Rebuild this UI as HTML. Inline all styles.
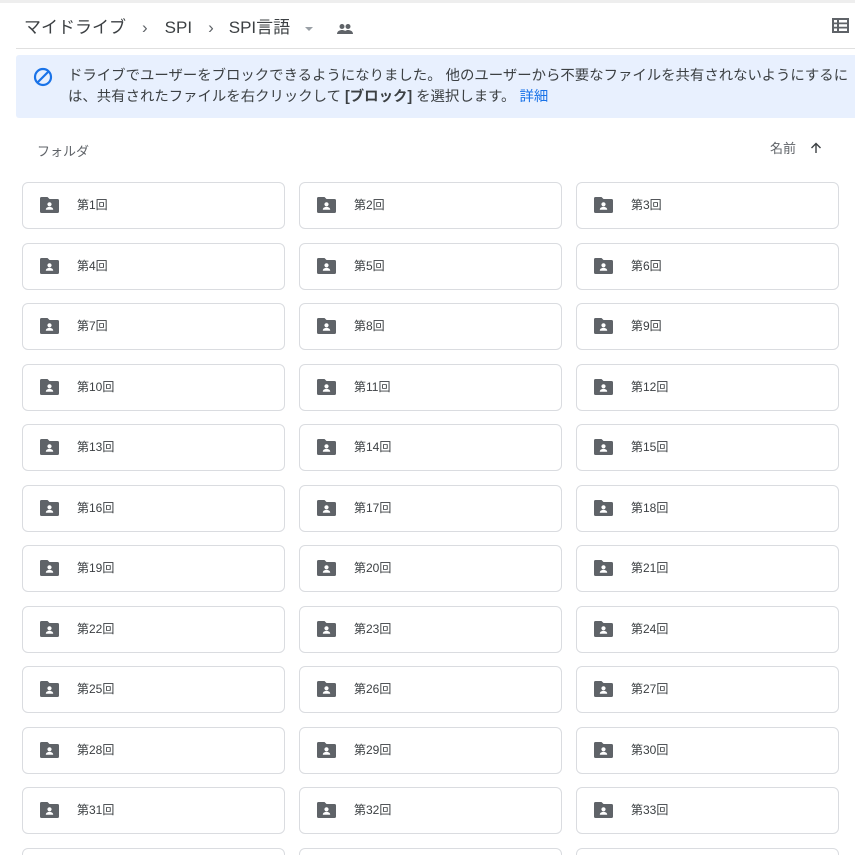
<!DOCTYPE html>
<html style="width:855px;height:855px;overflow:hidden"><head><meta charset="utf-8"><style>
*{margin:0;padding:0;box-sizing:border-box}
body{width:855px;height:855px;overflow:hidden;background:#fff;font-family:"Liberation Sans","Noto Sans CJK JP",sans-serif;position:relative;color:#3c4043}
.top{position:absolute;left:0;top:0;width:855px;height:3px;background:#eeeeee}
.bc{position:absolute;left:24px;top:13px;font-size:17px;color:#3c4043;white-space:nowrap}
.bc span{display:inline-block}
.div{position:absolute;left:16px;top:48px;width:839px;height:1px;background:#e0e0e0}
.banner{position:absolute;left:16px;top:55px;width:850px;height:63px;background:#e8f0fe;border-radius:3px}
.banner .t{position:absolute;left:52px;top:11px;font-size:14.4px;line-height:21px;color:#3c4043;white-space:nowrap}
.banner a{color:#1a73e8;text-decoration:none}
.lbl{position:absolute;left:37px;top:141px;font-size:13px;color:#5f6368}
.nm{position:absolute;left:770px;top:138px;font-size:13px;color:#5f6368}
.card{position:absolute;width:263px;height:47px;border:1px solid #dadce0;border-radius:6px;background:#fff}
.card svg{position:absolute;left:17px;top:14px}
.card .x{position:absolute;left:54px;top:13px;font-size:12px;color:#3c4043}
</style></head><body>
<div class="top"></div>
<div class="bc"><span>マイドライブ</span><span style="margin:0 0 0 16px;color:#5f6368">›</span><span style="margin-left:17px">SPI</span><span style="margin-left:16px;color:#5f6368">›</span><span style="margin-left:15px">SPI言語</span>
<svg width="12" height="8" style="margin-left:8px;vertical-align:middle" viewBox="0 0 12 8"><path d="M2 2h8L6 6z" fill="#9aa0a6"/></svg>
<svg width="18" height="12" style="margin-left:16px;vertical-align:middle" viewBox="0 0 18 12"><circle cx="6" cy="3.5" r="2.5" fill="#5f6368"/><circle cx="12" cy="3.5" r="2.5" fill="#5f6368"/><path d="M1 11c0-3 3-4 5-4s5 1 5 4zM8 11c0-3 2-4 4-4s5 1 5 4z" fill="#5f6368"/></svg></div>
<svg style="position:absolute;left:832px;top:18px" width="17" height="15" viewBox="0 0 17 15"><path d="M0 0h17v15H0z M2 2v2.5h3V2z M7 2v2.5h8V2z M2 6.2v2.5h3V6.2z M7 6.2v2.5h8V6.2z M2 10.5V13h3v-2.5z M7 10.5V13h8v-2.5z" fill="#5f6368" fill-rule="evenodd"/></svg>
<div class="div"></div>
<div class="banner">
<svg style="position:absolute;left:17px;top:12px" width="20" height="20" viewBox="0 0 20 20"><circle cx="10" cy="10" r="8" fill="none" stroke="#1a73e8" stroke-width="2.2"/><path d="M4.5 15.5L15.5 4.5" stroke="#1a73e8" stroke-width="2.2"/></svg>
<div class="t">ドライブでユーザーをブロックできるようになりました。 他のユーザーから不要なファイルを共有されないようにするに<br>は、共有されたファイルを右クリックして <b>[ブロック]</b> を選択します。 <a>詳細</a></div>
</div>
<div class="lbl">フォルダ</div>
<div class="nm">名前 <svg width="12" height="12" viewBox="0 0 12 12" style="margin-left:10px;vertical-align:-1px"><path d="M6 11V1.5M1.5 6L6 1.5 10.5 6" fill="none" stroke="#3c4043" stroke-width="1.4"/></svg></div>
<div id="g"></div>
<script>
var h='',xs=[22,299,576];
for(var i=0;i<36;i++){var r=Math.floor(i/3),c=i%3;var y=182+r*60.5;
h+='<div class="card" style="left:'+xs[c]+'px;top:'+y+'px"><svg width="19" height="16" viewBox="0 0 19 16"><path d="M1.5 0h6l2 2H17.5a1.5 1.5 0 0 1 1.5 1.5v11a1.5 1.5 0 0 1-1.5 1.5h-16A1.5 1.5 0 0 1 0 14.5v-13A1.5 1.5 0 0 1 1.5 0z" fill="#5f6368"/><circle cx="9.5" cy="7.3" r="2.1" fill="#fff"/><path d="M5.8 12.8c0-2.2 2.1-2.9 3.7-2.9s3.7.7 3.7 2.9z" fill="#fff"/></svg>'+(i<33?'<div class="x">第'+(i+1)+'回</div>':'')+'</div>';}
document.getElementById('g').innerHTML=h;
</script>
</body></html>
